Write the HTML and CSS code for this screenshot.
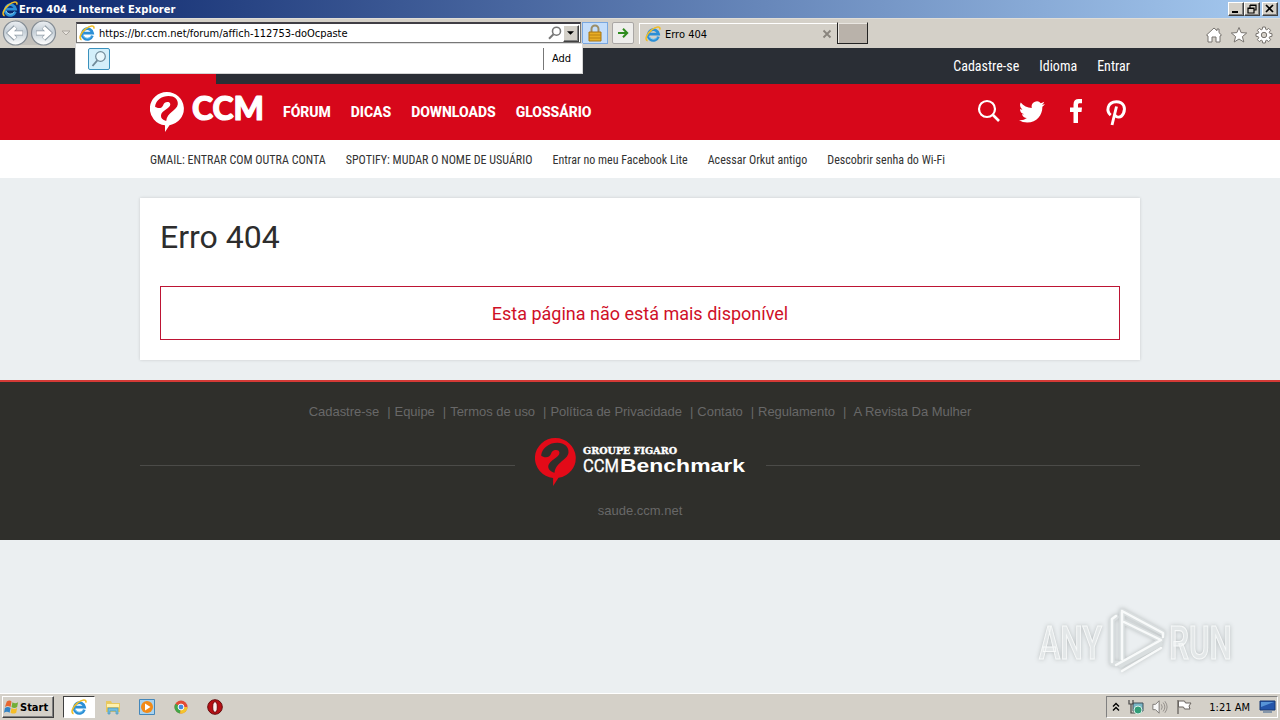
FILE: index.html
```html
<!DOCTYPE html>
<html lang="pt-BR">
<head>
  <meta charset="UTF-8" />
  <meta name="viewport" content="width=device-width, initial-scale=1.0"/>
  <title>Erro 404</title>
  <link rel="stylesheet" href="styles.css">
</head>
<body>

<!-- shared icons -->
<svg class="defs">
  <symbol id="ie" viewBox="0 0 16 16">
    <path d="M13.4 10.6A5.3 5.3 0 1 1 13.6 8.2H4.6" fill="none" stroke="#2b8fd6" stroke-width="2.8"/>
    <path d="M12.4 11A4.7 4.7 0 0 1 4 10" fill="none" stroke="#8cd3f6" stroke-width="1"/>
    <path d="M2.6 14.6C-.8 13.8 2 7.5 6.5 4 11 .3 15.8-.2 14.8 3.6" fill="none" stroke="#f0bd26" stroke-width="1.6"/>
  </symbol>
  <symbol id="bubble" viewBox="0 0 34 40">
    <path d="M17 0a17 16.7 0 0 1 2.5 33.2L15 40v-6.7A17 16.7 0 0 1 17 0z" fill="currentColor"/>
    <path class="mark" d="M5 14.500C6 8 12 4 18.500 4c6 0 9.800 3.500 9.300 8.200C27 18.500 17 20 16.200 29c-3.800-1-5.500-3-5.200-5.800.5-4.700 9.500-7 9.300-11 -.2-2.700-4-2.600-5.800-1.200-1.500 1.200-1 3.200-3 4.400-2 1.200-5 .6-6.500-.9z"/>
  </symbol>
</svg>

<div class="titlebar">
  <svg class="i16"><use href="#ie"/></svg>
  <span class="title">Erro 404 - Internet Explorer</span>
  <div class="winbtns">
    <button><svg viewBox="0 0 12 10"><path d="M2 8h6" stroke="#000" stroke-width="2"/></svg></button>
    <button><svg viewBox="0 0 12 10"><path d="M4 1h6v5H8M4 1v3M4 1.500h6M2 4h6v5H2zM2 4.500h6" fill="none" stroke="#000" stroke-width="1.200"/></svg></button>
    <button class="close"><svg viewBox="0 0 12 10"><path d="M2 1l7 7M9 1L2 8" stroke="#000" stroke-width="1.700"/></svg></button>
  </div>
</div>

<div class="toolbar">
  <svg class="backfwd" viewBox="0 0 74 28">
    <defs><linearGradient id="glass" x2="0" y2="1"><stop offset="0" stop-color="#eceff2"/><stop offset=".45" stop-color="#c5cfd7"/><stop offset="1" stop-color="#fff"/></linearGradient></defs>
    <path d="M15 1h28v25H15z" fill="#c3c0bb"/>
    <g fill="url(#glass)" stroke="#858d95" stroke-width="1.200"><circle cx="15.500" cy="14" r="12"/><circle cx="43.500" cy="14" r="12"/></g>
    <path d="M23 14H10m5.500-6L9.500 14l6 6M36 14h13m-5.500-6l6 6-6 6" fill="none" stroke="#8f9ba5" stroke-width="5"/>
    <path d="M22.500 14H10m5.500-5.500L9.500 14l6 5.500M36.500 14h12.500m-5.500-5.500l6 5.500-6 5.500" fill="none" stroke="#fff" stroke-width="3.300"/>
    <path d="M62 12h8l-4 4z" fill="#e8e4de" stroke="#aaa69f"/>
  </svg>
  <div class="address">
    <svg class="i16"><use href="#ie"/></svg>
    <span class="url">https://br.ccm.net/forum/affich-112753-doOcpaste</span>
    <svg class="lens" viewBox="0 0 14 14"><circle cx="8.500" cy="5.200" r="4" fill="none" stroke="#777" stroke-width="1.600"/><path d="M5.500 8.200L1 12.700" stroke="#777" stroke-width="2"/></svg>
    <button class="drop"><svg viewBox="0 0 14 16"><path d="M3 6h8l-4 4z"/></svg></button>
    <div class="suggest">
      <svg viewBox="0 0 22 22"><rect x=".5" y=".5" width="21" height="21" rx="1.500" fill="#d3effa" stroke="#3a91bd"/><circle cx="12.500" cy="8.500" r="4.800" fill="#e9f8fd" stroke="#708a98" stroke-width="1.200"/><path d="M9.300 12.300L4.500 18" stroke="#708a98" stroke-width="1.800"/></svg>
      <span class="add">Add</span>
    </div>
  </div>
  <div class="lock"><svg viewBox="0 0 16 18"><path d="M4.500 9V5a3.500 3.500 0 0 1 7 0v4" fill="none" stroke="#9c8d66" stroke-width="2"/><path d="M2 8h12v9H2z" fill="#e8ad25" stroke="#a87513"/><path d="M2 11h12M2 14h12" stroke="#ba8113"/></svg></div>
  <div class="go"><svg viewBox="0 0 14 14"><path d="M2 7h9M7 2.800L11.200 7 7 11.200" fill="none" stroke="#2f8c1e" stroke-width="2"/></svg></div>
  <div class="tab">
    <svg class="i16"><use href="#ie"/></svg>
    <span>Erro 404</span>
    <svg class="tabx" viewBox="0 0 10 10"><path d="M1.500 1.500l7 7M8.500 1.500l-7 7" stroke="#89847d" stroke-width="1.800"/></svg>
  </div>
  <div class="newtab"></div>
  <div class="tools">
    <svg viewBox="0 0 18 18"><path d="M1.500 9L9 2l3 2.700V3h2v3.700L16.500 9 15 10v6h-4v-5H7v5H3v-6z" fill="#fff" stroke="#77736e"/></svg>
    <svg viewBox="0 0 18 18"><path d="M9 1.500l2.100 5.100 5.600.4-4.300 3.600 1.400 5.400L9 13l-4.800 3 1.400-5.400L1.300 7l5.600-.4z" fill="#fff" stroke="#77736e"/></svg>
    <svg viewBox="0 0 18 18">
      <path d="M7.700 1h2.600l.4 2.300 1.100.5 1.900-1.400 1.900 1.900-1.400 1.900.5 1.100 2.300.4v2.600l-2.300.4-.5 1.100 1.400 1.900-1.900 1.900-1.900-1.400-1.100.5-.4 2.300H7.700l-.4-2.300-1.100-.5-1.900 1.400-1.900-1.900 1.400-1.900-.5-1.100L1 10.300V7.700l2.300-.4.5-1.100-1.400-1.900 1.900-1.900 1.900 1.400 1.100-.5z" fill="#fff" stroke="#77736e"/>
      <circle cx="9" cy="9" r="2.700" fill="#d4d0c8" stroke="#77736e"/>
    </svg>
  </div>
</div>

<div class="topbar">
  <div class="wrap">
    <a>Cadastre-se</a>
    <a>Idioma</a>
    <a>Entrar</a>
  </div>
</div>

<header class="header">
  <div class="wrap">
    <div class="logo">
      <svg class="bubble"><use href="#bubble"/></svg>
      <svg class="ccm" viewBox="0 0 74 30"><text x="1" y="28" textLength="72" lengthAdjust="spacingAndGlyphs">CCM</text></svg>
    </div>
    <nav class="menu">
      <a>FÓRUM</a>
      <a>DICAS</a>
      <a>DOWNLOADS</a>
      <a>GLOSSÁRIO</a>
    </nav>
    <div class="social">
      <svg class="search" viewBox="0 0 24 24"><circle cx="10" cy="10" r="8" fill="none" stroke="#fff" stroke-width="2.200"/><path d="M16 16l6 6" stroke="#fff" stroke-width="2.600"/></svg>
      <svg class="twitter" viewBox="0 0 24 24"><path fill="#fff" d="M23.950 4.570a10 10 0 0 1-2.820.77 4.960 4.960 0 0 0 2.160-2.720c-.95.550-2 .950-3.130 1.190a4.920 4.920 0 0 0-8.380 4.480C7.690 8.090 4.070 6.130 1.640 3.160a4.820 4.820 0 0 0-.67 2.480c0 1.710.87 3.210 2.190 4.100a4.900 4.900 0 0 1-2.230-.62v.06a4.920 4.920 0 0 0 3.950 4.830 5 5 0 0 1-2.210.08 4.940 4.940 0 0 0 4.600 3.420A9.870 9.870 0 0 1 0 19.540a14 14 0 0 0 7.550 2.210c9.050 0 14-7.500 14-13.980l-.02-.64a9.900 9.900 0 0 0 2.420-2.560z"/></svg>
      <svg class="facebook" viewBox="0 0 12 24"><path fill="#fff" d="M3.500 24V13H0V8.600h3.500V5.400C3.500 1.800 5.500 0 8.600 0H12v4.200H9.800C8.400 4.200 8 4.800 8 6v2.600h4l-.5 4.400H8v11z"/></svg>
      <svg class="pinterest" viewBox="0 0 20 26"><path d="M4.700 15.200C.2 11.500.8 2 10.400 1.800c7.500 0 9.600 6.500 7 11.700-2.400 4.800-7 4.400-8.300 1.500M10.500 6.500L6 25" fill="none" stroke="#fff" stroke-width="2.900"/></svg>
    </div>
  </div>
</header>

<nav class="subnav">
  <div class="wrap">
    <a>GMAIL: ENTRAR COM OUTRA CONTA</a>
    <a>SPOTIFY: MUDAR O NOME DE USUÁRIO</a>
    <a>Entrar no meu Facebook Lite</a>
    <a>Acessar Orkut antigo</a>
    <a>Descobrir senha do Wi-Fi</a>
  </div>
</nav>

<main class="card">
  <h1>Erro 404</h1>
  <p class="message">Esta página não está mais disponível</p>
</main>

<footer class="footer">
  <div class="links">
    <a>Cadastre-se</a><a>Equipe</a><a>Termos de uso</a><a>Política de Privacidade</a><a>Contato</a><a>Regulamento</a><a class="last">A Revista Da Mulher</a>
  </div>
  <div class="brand">
    <svg class="bubble"><use href="#bubble"/></svg>
    <svg class="group" viewBox="0 0 164 32">
      <text class="serif" x="0" y="10" textLength="94" lengthAdjust="spacingAndGlyphs">GROUPE FIGARO</text>
      <text class="thin" x="0" y="28" textLength="36" lengthAdjust="spacingAndGlyphs">CCM</text>
      <text class="wide" x="37" y="28" textLength="125" lengthAdjust="spacingAndGlyphs">Benchmark</text>
    </svg>
  </div>
  <div class="site">saude.ccm.net</div>
</footer>

<div class="desktop">
  <svg class="anyrun" viewBox="0 0 210 70">
    <g class="word">
      <text x="9" y="52" textLength="63" lengthAdjust="spacingAndGlyphs">ANY</text>
      <text x="139" y="52" textLength="63" lengthAdjust="spacingAndGlyphs">RUN</text>
    </g>
    <g class="tri shade"><path d="M86 10l-4 3v43l10 1 38-20M92 4v48M92 4l41 22M94 15l37 18-40 25"/></g>
    <g class="tri"><path d="M86 9l-4 3v43M92 4v48M92 4l41 22v4M94 15l37 18-45 25M92 64l39-23"/></g>
  </svg>
</div>

<div class="taskbar">
  <button class="start">
    <svg viewBox="0 0 16 16"><path d="M3 2q3-2 5 0L7 8Q4 6 1 8z" fill="#e76730"/><path d="M9 3q3 2 6 0l-1 5q-3 2-6 0z" fill="#72ae36"/><path d="M1 9q3-2 6 0l-1 5q-3-2-6 0z" fill="#3283c5"/><path d="M8 9q3 2 6 0l-1 5q-3 2-6 0z" fill="#f5bd27"/></svg>
    Start
  </button>
  <div class="apps">
    <span class="active"><svg><use href="#ie"/></svg></span>
    <span><svg viewBox="0 0 16 16"><path d="M1 2h5l1 2h8v9H1z" fill="#e8c85f"/><path d="M2 5h12v3H2z" fill="#fff1ad"/><path d="M3 15V9h10v6h-2v-3H5v3z" fill="#72bedf" stroke="#4b98bd" stroke-width=".7"/></svg></span>
    <span><svg viewBox="0 0 16 16"><path d="M.5.500h15v15H.5z" fill="#a8d2ef" stroke="#4487ba"/><circle cx="8" cy="8" r="6" fill="#f28a17"/><path d="M6 4.500v7l5.500-3.500z" fill="#fff"/></svg></span>
    <span><svg viewBox="0 0 16 16"><circle cx="8" cy="8" r="6.500" fill="#e34c35"/><path d="M8 8L2.400 4.700A6.500 6.500 0 0 0 7 14.500z" fill="#42a648"/><path d="M8 8h6.500a6.500 6.500 0 0 1-7.500 6.500z" fill="#f4c52b"/><circle cx="8" cy="8" r="2.900" fill="#448ae0" stroke="#fff"/></svg></span>
    <span><svg viewBox="0 0 16 16"><circle cx="8" cy="8" r="7.300" fill="#b80f14" stroke="#650c0d"/><ellipse cx="8" cy="8" rx="2.300" ry="5.300" fill="#faf0ee" stroke="#72090c"/></svg></span>
  </div>
  <div class="tray">
    <svg class="chev" viewBox="0 0 8 10"><path d="M1 4.500l3-3 3 3M1 8.500l3-3 3 3" fill="none" stroke="#000" stroke-width="1.400"/></svg>
    <svg viewBox="0 0 16 16"><path d="M5 4h10v8H5z" fill="#79b7c8" stroke="#40505a"/><path d="M1 1v4h4V1M3 5v9h7" fill="none" stroke="#484848" stroke-width="1.200"/><circle cx="10" cy="11" r="4" fill="#319d78" stroke="#d7eee6"/></svg>
    <svg viewBox="0 0 18 16"><path d="M1 5h3l4-4v14l-4-4H1z" fill="#f7f7f7" stroke="#74716d"/><path d="M10.500 5q2 3 0 6M12.500 3q4 5 0 10M14.500 1.500q5 6.500 0 13" fill="none" stroke="#8d8984"/></svg>
    <svg viewBox="0 0 16 16"><path d="M2 1v14" stroke="#68635f" stroke-width="1.300"/><path d="M2.500 2h6l1 2H15l-2 3 1 3H8.500l-1-2h-5z" fill="#fff" stroke="#68635f"/></svg>
    <span class="clock">1:21 AM</span>
    <svg class="show" viewBox="0 0 18 16"><path d="M2 2h15v9H2z" fill="#2455aa" stroke="#173973"/><path d="M3 3h13L3 8z" fill="#5794d7"/><path d="M5 13h9" stroke="#8697aa" stroke-width="2"/></svg>
  </div>
</div>

</body>
</html>
```
FILE: styles.css
```css
* { box-sizing: border-box; }
body {
  margin: 0; width: 1280px; height: 720px; overflow: hidden;
  display: flex; flex-direction: column;
  background: #ebeff1; font-family: Roboto, sans-serif;
}
svg { display: block; flex: none; overflow: visible; }
button { padding: 0; }
.defs { position: absolute; width: 0; height: 0; }
.i16 { width: 16px; height: 16px; }
.wrap { width: 1000px; margin: 0 auto; padding: 0 10px; display: flex; align-items: center; }

/* browser window */
.titlebar {
  height: 18px; flex: none; display: flex; align-items: center; padding: 0 2px;
  background: linear-gradient(90deg, #0a246a, #a6caf0);
  color: #fff; font: bold 11px "DejaVu Sans Condensed", "DejaVu Sans", sans-serif;
}
.title { margin-left: 1px; letter-spacing: .08px; }
.winbtns { margin-left: auto; display: flex; }
.winbtns button, .drop, .start {
  background: #d4d0c8; border: 1px solid; border-color: #fff #404040 #404040 #fff;
  box-shadow: inset -1px -1px #808080;
}
.winbtns button { width: 16px; height: 14px; display: flex; align-items: center; justify-content: center; }
.winbtns svg { width: 12px; height: 10px; }
.winbtns .close { margin-left: 2px; }
.toolbar {
  height: 30px; flex: none; display: flex; align-items: flex-start; padding-top: 3px;
  background: #d4d0c8; border-top: 1px solid #e0ddd7;
  font: 11px "DejaVu Sans Condensed", "DejaVu Sans", sans-serif; color: #000;
}
.backfwd { width: 74px; height: 28px; margin-right: 2px; margin-top: -3px; }
.address {
  position: relative; width: 505px; height: 21px; display: flex; align-items: center;
  background: #fff; border: 1px solid #777; border-top: 2px solid #403e45; padding-left: 2px;
}
.url { margin-left: 4px; letter-spacing: -.02px; }
.lens { width: 14px; height: 14px; margin-left: auto; margin-right: 1px; }
.drop { width: 16px; height: 17px; margin-right: 1px; }
.drop svg { width: 13px; height: 14px; }
.suggest {
  position: absolute; z-index: 5; left: -2px; top: 19px; width: 508px; height: 31px;
  display: flex; align-items: center; padding-left: 12px;
  background: #fff; border: 1px solid #d5d5d5; border-top-color: #ddd;
}
.suggest svg { width: 22px; height: 22px; }
.add { margin-left: auto; width: 39px; height: 22px; line-height: 22px; padding-left: 8px; border-left: 1px solid #777; }
.lock { width: 26px; height: 22px; margin-left: 1px; display: flex; justify-content: center; align-items: center; background: #c4ddfa; border: 1px solid #7aa7df; }
.lock svg { width: 16px; height: 18px; }
.go { width: 22px; height: 22px; margin-left: 4px; display: flex; justify-content: center; align-items: center; background: #eeedeb; border: 1px solid #aaa7a5; border-radius: 2px; }
.go svg { width: 14px; height: 14px; }
.tab { width: 198px; height: 21px; margin: 1px 0 0 5px; padding: 0 5px; display: flex; align-items: center; border-left: 1px solid #fff; border-top: 1px solid #fff; }
.tab span { margin-left: 4px; }
.tabx { width: 10px; height: 10px; margin-left: auto; }
.newtab { width: 31px; height: 22px; background: #b9b2aa; border: 1px solid #222; border-top-color: #d4d0c8; box-shadow: inset 1px 1px #e9e6e1; }
.tools { margin: 4px 7px 0 auto; display: flex; gap: 7px; }
.tools svg { width: 18px; height: 18px; }

/* site header */
.topbar { height: 36px; flex: none; background: #2a2e35; }
.topbar .wrap { height: 36px; justify-content: flex-end; gap: 20px; color: #fff; font-size: 14px; font-family: "Roboto Condensed", Roboto, sans-serif; font-stretch: 75%; }
.header { --mark: #d7071a; height: 56px; flex: none; background: #d7071a; color: #fff; }
.header .wrap { height: 56px; }
.logo { position: relative; display: flex; align-items: flex-start; height: 56px; padding-top: 8px; }
/* red tab that rises into the dark bar */
.logo::before { content: ""; position: absolute; left: -10px; top: -10px; width: 76px; height: 10px; background: #d7071a; }
.logo .bubble { width: 34px; height: 40px; color: #fff; }
.mark { fill: var(--mark); }
.ccm { width: 74px; height: 30px; margin-left: 7px; }
.ccm text { font: 900 32px Lato, sans-serif; fill: #fff; stroke: #fff; stroke-width: 1.2; stroke-linejoin: round; }
.menu { display: flex; gap: 20px; margin-left: 18px; font-size: 14px; font-weight: 800; letter-spacing: -.03px; }
.social { margin-left: auto; display: flex; align-items: center; height: 54px; }
.search { width: 24px; height: 24px; margin-right: 18px; margin-top: -2px; margin-left: -1px; }
.twitter { width: 26px; height: 26px; margin-right: 25px; }
.facebook { width: 12px; height: 24px; margin-right: 24px; margin-top: -3px; }
.pinterest { width: 20px; height: 26px; margin-right: 4px; margin-top: 2px; }
.subnav { height: 38px; flex: none; background: #fff; }
.subnav .wrap { height: 39px; gap: 20px; color: #333; font-size: 12px; letter-spacing: .01px; font-family: "Roboto Condensed", Roboto, sans-serif; font-stretch: 75%; }

/* content */
.card { width: 1000px; height: 162px; flex: none; margin: 20px auto; padding: 20px; background: #fff; box-shadow: 0 0 3px rgba(0, 0, 0, .15); }
h1 { margin: 0 0 30px; font-size: 32px; font-weight: 400; line-height: 38px; color: #2d2d2d; }
.message { margin: 0; height: 54px; line-height: 53px; border: 1px solid #bd1434; color: #cf1027; font-size: 18px; text-align: center; }

.footer { --mark: #2f2f2b; height: 160px; flex: none; background: #2f2f2b; border-top: 2px solid #d43a36; color: #686868; font: 13px "Liberation Sans", sans-serif; text-align: center; }
.links { display: flex; justify-content: center; margin-top: 21px; height: 17px; line-height: 17px; letter-spacing: -.03px; }
.links a + a::before { content: "|"; margin: 0 4px 0 8px; }
.links .last::before { margin-right: 7px; }
.brand { width: 1000px; height: 50px; margin: 17px auto 0; display: flex; align-items: flex-start; }
.brand::before, .brand::after { content: ""; height: 1px; flex: 1; margin-top: 28px; background: #4b4b48; }
.brand .bubble { width: 41px; height: 48px; margin: 1px 7px 0 20px; color: #e30a18; }
.group { width: 164px; height: 32px; margin: 7px 19px 0 0; fill: #fff; }
.serif { font: 900 10px "DejaVu Serif", serif; stroke: #fff; stroke-width: .4; }
.thin { font: 18px Roboto, sans-serif; stroke: #fff; stroke-width: .3; }
.wide { font: bold 18px "Liberation Sans", sans-serif; }
.site { margin-top: 16px; }

/* watermark */
.desktop { flex: 1; }
.anyrun { width: 210px; height: 70px; margin: 67px 0 0 1030px; filter: drop-shadow(0 0 2px #b9bebf); }
.word text { font: 500 46px Roboto, sans-serif; fill: #e3e7e8; stroke: #f7f9f9; stroke-width: 1.2; }
.tri { fill: none; stroke: #f8fafa; stroke-width: 2.5; stroke-linejoin: round; stroke-linecap: round; }
.shade { stroke: #d9dedf; stroke-width: 5.5; }

.taskbar { height: 27px; flex: none; display: flex; align-items: center; padding: 0 2px; background: #d4d0c8; border-top: 1px solid #fff; font: 11px "DejaVu Sans Condensed", "DejaVu Sans", sans-serif; }
.start { width: 52px; height: 22px; display: flex; align-items: center; gap: 1px; padding-left: 1px; font: bold 11px "DejaVu Sans Condensed", sans-serif; }
.start svg { width: 15px; height: 16px; }
.apps { display: flex; margin-left: 9px; gap: 2px; }
.apps span { width: 32px; height: 22px; display: flex; align-items: center; justify-content: center; }
.apps svg { width: 16px; height: 16px; }
.apps .active { background: #fff; border: 1px solid; border-color: #404040 #fff #fff #404040; }
.tray { width: 172px; height: 22px; margin-left: auto; padding: 0 1px 0 5px; display: flex; align-items: center; gap: 8px; border: 1px solid; border-color: #808080 #fff #fff #808080; }
.tray svg { width: 16px; height: 16px; }
.tray .chev { width: 8px; height: 10px; }
.clock { margin-left: auto; }
.tray .show { width: 18px; }
```
